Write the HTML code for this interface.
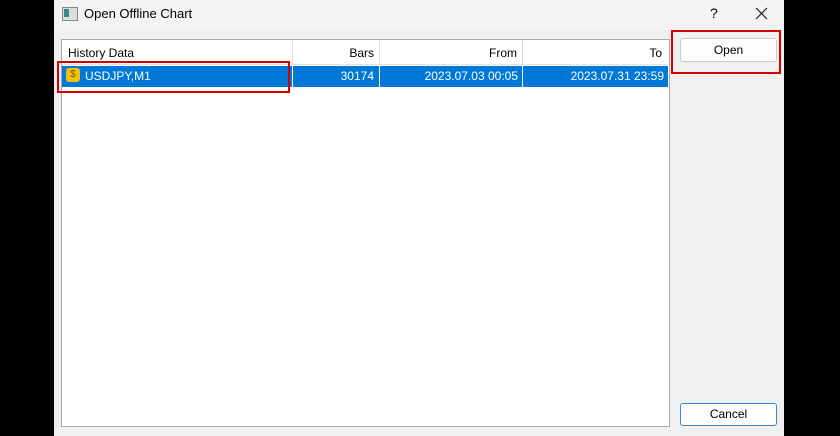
<!DOCTYPE html><html><head><style>
body{margin:0;width:840px;height:436px;background:#000;position:relative;overflow:hidden;font-family:"Liberation Sans",sans-serif;font-size:12px;color:#000}
.a{position:absolute}
.r{text-align:right}
</style></head><body>
<div class="a" style="left:54px;top:0;width:730px;height:436px;background:#f0f0f0"></div>
<div class="a" style="left:54px;top:0;width:730px;height:30px;background:#f3f3f3"></div>
<div class="a" style="left:62px;top:7px;width:14px;height:12px;border:1px solid #888;background:#ddd"></div>
<div class="a" style="left:64px;top:9px;width:5px;height:8px;background:#3a8a8a"></div>
<div class="a" style="left:84px;top:6px;font-size:13px">Open Offline Chart</div>
<div class="a" style="left:710px;top:5px;font-size:14px">?</div>
<svg class="a" style="left:755px;top:7px" width="13" height="13"><path d="M1 1L12 12M12 1L1 12" stroke="#222" stroke-width="1.2"/></svg>
<div class="a" style="left:61px;top:39px;width:607px;height:386px;background:#fff;border:1px solid #aaa"></div>
<div class="a" style="left:62px;top:40px;width:606px;height:24px;background:#fff;border-bottom:1px solid #e0e0e0"></div>
<div class="a" style="left:292px;top:40px;width:1px;height:25px;background:#ddd"></div>
<div class="a" style="left:379px;top:40px;width:1px;height:25px;background:#ddd"></div>
<div class="a" style="left:522px;top:40px;width:1px;height:25px;background:#ddd"></div>
<div class="a" style="left:68px;top:46px">History Data</div>
<div class="a r" style="left:300px;width:74px;top:46px">Bars</div>
<div class="a r" style="left:400px;width:117px;top:46px">From</div>
<div class="a r" style="left:560px;width:102px;top:46px">To</div>
<div class="a" style="left:62px;top:66px;width:606px;height:21px;background:#0078d7"></div>
<div class="a" style="left:292px;top:66px;width:1px;height:21px;background:#fff"></div>
<div class="a" style="left:379px;top:66px;width:1px;height:21px;background:#fff"></div>
<div class="a" style="left:522px;top:66px;width:1px;height:21px;background:#fff"></div>
<div class="a" style="left:66px;top:68px;width:14px;height:14px;background:#f4c20d;border-radius:3px;font-size:10px;text-align:center;line-height:14px;color:#7a5a00">$</div>
<div class="a" style="left:85px;top:69px;color:#fff">USDJPY,M1</div>
<div class="a r" style="left:300px;width:74px;top:69px;color:#fff">30174</div>
<div class="a r" style="left:400px;width:118px;top:69px;color:#fff">2023.07.03 00:05</div>
<div class="a r" style="left:540px;width:124px;top:69px;color:#fff">2023.07.31 23:59</div>
<div class="a" style="left:57px;top:61px;width:229px;height:28px;border:2px solid #d40000"></div>
<div class="a" style="left:680px;top:38px;width:95px;height:22px;background:#fdfdfd;border:1px solid #ccc;border-radius:3px;text-align:center;line-height:22px">Open</div>
<div class="a" style="left:671px;top:30px;width:106px;height:40px;border:2px solid #d40000"></div>
<div class="a" style="left:680px;top:403px;width:95px;height:21px;background:#fdfdfd;border:1px solid #3a86d0;border-radius:3px;text-align:center;line-height:21px">Cancel</div>
</body></html>
